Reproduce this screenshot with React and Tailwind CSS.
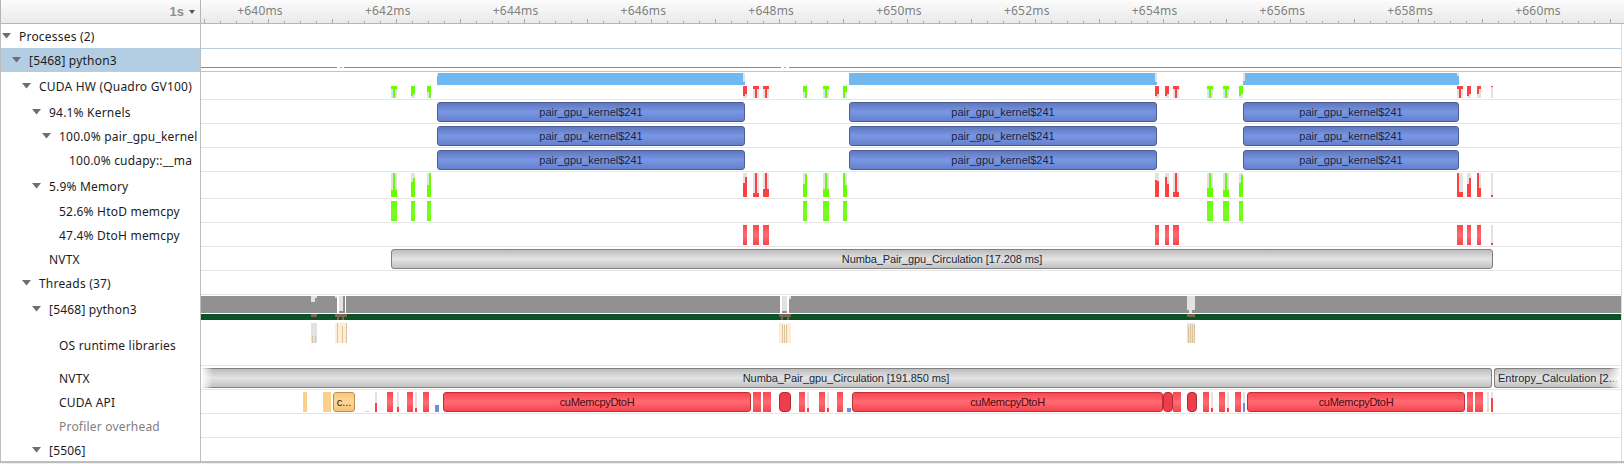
import React from 'react'

const ORIGIN = 201

const fills = {
  g: 'bg-[#66ff00]',
  r: 'bg-[#ff4040]',
  x: 'bg-[#e2e2e2]',
  b: 'bg-[#72b8f0]',
  o: 'bg-[#fcd08c]',
  l: 'bg-[#6f8fdc]',
  br: 'bg-[#7c6650]',
  wh: 'bg-white',
  t: 'bg-[#dcc49c]',
  p: 'bg-[#fdeed8]',
}

const rulerLabels = [640, 642, 644, 646, 648, 650, 652, 654, 656, 658, 660]
const ticks = Array.from({ length: 90 }, (_, i) => i)

function Piece({ x, w, y, h, c }) {
  return <div className={`absolute ${fills[c]}`} style={{ left: x - ORIGIN, width: w, top: y, height: h }} />
}

function Pieces({ list }) {
  return list.map(([x, w, y, h, c], i) => <Piece key={i} x={x} w={w} y={y} h={h} c={c} />)
}

// small columns under the blue bars, y 14..26 of the row
function topCols(list) {
  const out = []
  list.forEach(([x, w, c, kind]) => {
    out.push([x, w, 14, 12, 'x'])
    if (kind === 'T') {
      out.push([x, w, 14, 3, c], [x + 2, 2, 14, 12, c])
    } else if (kind === 'P') {
      out.push([x, w, 14, 8, c], [x, 2, 14, 10, c])
    } else if (kind === 'F') {
      out.push([x, w, 14, 6, c], [x + 2, 2, 14, 12, c])
    } else if (kind === 'E') {
      out.push([x, w, 14, 6, c], [x, 2, 14, 12, c])
    } else if (kind === 'Q') {
      out.push([x, w, 14, 3, c], [x, 2, 14, 8, c])
    } else {
      out.push([x, w, 14, 1, c])
    }
  })
  return out
}

// memory columns, y 1..25 of the row
function memCols(list) {
  const out = []
  list.forEach(([x, w, c, kind, a, b]) => {
    out.push([x, w, 1, 24, 'x'])
    if (kind === 'T') {
      out.push([x + 2, 2, 1, 24, c], [x, w, a, 25 - a, c])
    } else if (kind === 'L') {
      out.push([x, 2, 1, 24, c], [x, w, a, 25 - a, c])
    } else if (kind === 'H') {
      out.push([x, 2, a, 25 - a, c], [x + 2, 2, b, 25 - b, c])
    } else {
      out.push([x, w, 23, 2, c])
    }
  })
  return out
}

const cudaPieces = topCols([
  [391, 6, 'g', 'T'], [411, 4, 'g', 'P'], [427, 4, 'g', 'F'],
  [743, 4, 'r', 'P'], [753, 6, 'r', 'T'], [763, 6, 'r', 'T'],
  [803, 4, 'g', 'F'], [823, 6, 'g', 'T'], [843, 4, 'g', 'E'],
  [1155, 4, 'r', 'P'], [1165, 4, 'r', 'P'], [1173, 6, 'r', 'T'],
  [1207, 6, 'g', 'T'], [1223, 6, 'g', 'T'], [1239, 4, 'g', 'P'],
  [1457, 6, 'r', 'T'], [1467, 4, 'r', 'P'], [1477, 4, 'r', 'Q'], [1491, 2, 'r', 'S'],
])

const memoryPieces = memCols([
  [391, 6, 'g', 'T', 18], [411, 4, 'g', 'H', 10, 6], [427, 4, 'g', 'H', 13, 1],
  [743, 4, 'r', 'H', 11, 5], [753, 6, 'r', 'T', 21], [763, 6, 'r', 'T', 17],
  [803, 4, 'g', 'H', 12, 2], [823, 6, 'g', 'T', 17], [843, 4, 'g', 'H', 1, 13],
  [1155, 4, 'r', 'H', 8, 9], [1165, 4, 'r', 'H', 5, 12], [1173, 6, 'r', 'T', 20],
  [1207, 6, 'g', 'T', 16], [1223, 6, 'g', 'T', 18], [1239, 4, 'g', 'H', 11, 3],
  [1457, 6, 'r', 'L', 20], [1467, 4, 'r', 'H', 12, 6], [1477, 4, 'r', 'H', 1, 16], [1491, 2, 'r', 'S'],
])

const htodBars = [[391, 6], [411, 4], [427, 4], [803, 4], [823, 6], [843, 4], [1207, 6], [1223, 6], [1239, 4]]
const dtohBars = [[743, 4], [753, 6], [763, 6], [1155, 4], [1165, 4], [1173, 6], [1457, 6], [1467, 4], [1477, 4]]
const kernelBars = [[437, 308], [849, 308], [1243, 216]]

const threadPieces = [
  [311, 4, 1, 6, 'x'], [315, 2, 1, 2, 'x'],
  [337, 2, 1, 18, 'wh'], [339, 4, 1, 15, 'x'], [345, 1, 1, 18, 'wh'], [335, 2, 1, 2, 'x'],
  [780, 2, 1, 18, 'wh'], [782, 5, 1, 15, 'x'], [787, 2, 1, 18, 'wh'], [789, 2, 1, 3, 'x'],
  [1187, 8, 1, 14, 'x'], [1189, 3, 15, 3, 'x'],
  [311, 6, 19, 3, 'br'], [335, 12, 19, 3, 'br'], [779, 12, 19, 3, 'br'], [1187, 8, 19, 3, 'br'],
  [337, 2, 19, 6, 'br'], [342, 2, 19, 6, 'br'], [781, 2, 19, 6, 'br'], [787, 2, 19, 6, 'br'],
]

const osPieces = [
  [311, 6, 0, 20, 'x'], [312, 1, 13, 7, 't'], [315, 1, 13, 7, 't'],
  [335, 12, 0, 20, 'p'], [337, 1, 0, 20, 't'], [342, 1, 3, 17, 't'], [346, 1, 0, 20, 't'],
  [779, 12, 0, 20, 'p'], [782, 1, 2, 18, 't'], [784, 1, 2, 18, 't'], [786, 1, 2, 18, 't'],
  [1187, 8, 0, 20, 'x'], [1188, 1, 4, 16, 't'], [1190, 1, 2, 18, 't'], [1192, 1, 2, 18, 't'], [1194, 1, 2, 18, 't'],
]

const apiFlat = [
  [303, 4, 2, 20, 'o'], [323, 8, 2, 20, 'o'], [365, 4, 21, 1, 'o'],
  [375, 2, 2, 20, 'x'], [375, 2, 13, 9, 'r'], [397, 2, 2, 20, 'x'], [397, 2, 17, 5, 'r'],
  [415, 2, 2, 20, 'x'], [415, 2, 18, 4, 'r'], [435, 4, 15, 7, 'l'],
  [807, 2, 2, 20, 'x'], [807, 2, 18, 4, 'r'], [827, 2, 2, 20, 'x'], [827, 2, 18, 4, 'r'],
  [847, 4, 18, 4, 'l'], [1211, 2, 2, 20, 'x'], [1211, 2, 18, 4, 'r'],
  [1227, 2, 2, 20, 'x'], [1227, 2, 18, 4, 'r'], [1243, 2, 2, 20, 'x'], [1243, 2, 13, 9, 'l'],
  [1487, 2, 2, 20, 'x'], [1487, 2, 19, 3, 'o'], [1491, 2, 2, 20, 'x'], [1491, 2, 8, 14, 'r'],
]
const apiRed = [
  [387, 6], [407, 6], [423, 6], [753, 8], [763, 8], [799, 6], [819, 6], [837, 6],
  [1173, 8], [1203, 6], [1219, 6], [1235, 6], [1467, 6], [1475, 8],
]
const apiMain = [[443, 308], [852, 311], [1247, 218]]
const apiDark = [[779, 12], [1187, 10], [1163, 10]]

const redGlow = 'bg-linear-to-b from-[#fb4450] via-[#ff6a72] to-[#f5434e]'
const greyGlow = 'bg-linear-to-b from-[#bdbdbd] via-[#e4e4e4] to-[#c2c2c2]'

function Box({ x, w, className, children }) {
  return (
    <div
      className={`absolute top-[2px] box-border flex h-5 items-center justify-center overflow-hidden border text-[11px] whitespace-nowrap ${className}`}
      style={{ left: x - ORIGIN, width: w }}
    >
      {children}
    </div>
  )
}

function Caret() {
  return (
    <svg className="absolute top-1/2 -mt-[4px]" style={{ left: -17 }} width="9" height="6" viewBox="0 0 9 6">
      <path d="M0 0H9L4.5 5.5Z" fill="#6e6e6e" />
    </svg>
  )
}

function Row({ label, level = 0, caret, height = 24, selected, muted, children, timelineClass = '' }) {
  return (
    <div className="flex shrink-0" style={{ height }}>
      <div
        className={`box-border flex w-[201px] shrink-0 items-center overflow-hidden border-x border-[#bdbdbd] pt-[2px] font-["Noto_Sans",sans-serif] text-[12px] tracking-[0.2px] whitespace-nowrap ${
          selected ? 'bg-[#b3cde3]' : 'bg-white'
        } ${muted ? 'text-[#808080]' : 'text-[#1c1c1c]'}`}
        style={{ paddingLeft: 18 + level * 10 }}
      >
        <span className="relative">
          {caret && <Caret />}
          {label}
        </span>
      </div>
      <div className={`relative box-border w-[1420px] overflow-hidden bg-white ${timelineClass}`}>{children}</div>
      <div className="w-[3px] border-l border-[#dcdcdc] bg-white" />
    </div>
  )
}

function Ruler() {
  return (
    <div className="flex h-6 shrink-0 bg-linear-to-b from-[#fcfcfc] to-[#e9e9e9]">
      <div className="box-border flex w-[201px] shrink-0 items-center justify-end gap-[5px] border-x border-b border-[#b5b5b5] pr-[5px]">
        <span className="text-[13px] font-bold text-[#8f8f8f]">1s</span>
        <svg width="6" height="4" viewBox="0 0 6 4">
          <path d="M0 0H6L3 4Z" fill="#555" />
        </svg>
      </div>
      <div className="relative box-border flex-1 overflow-hidden border-b border-[#b5b5b5]">
        {rulerLabels.map((ms) => (
          <span
            key={ms}
            className='absolute top-[2px] w-[60px] text-center font-["Noto_Sans",sans-serif] text-[12px] tracking-[0.2px] text-[#808080]'
            style={{ left: 260 + (ms - 640) * 63.9 - ORIGIN - 30 }}
          >
            +{ms}ms
          </span>
        ))}
        {ticks.map((i) => (
          <div
            key={i}
            className="absolute bottom-0 w-px bg-[#a8a8a8]"
            style={{ left: Math.round(3 + i * 15.975), height: i % 4 === 0 ? 4 : 2 }}
          />
        ))}
      </div>
    </div>
  )
}

const rowLine = 'border-b border-[#e6e6e6]'

export default function App() {
  return (
    <div className='flex h-[464px] w-[1624px] flex-col overflow-hidden bg-[#f1f1f1] font-["Liberation_Sans",sans-serif]'>
      <Ruler />
      <div className="flex h-[437px] shrink-0 flex-col overflow-hidden">
        <Row label="Processes (2)" caret />
        <Row label="[5468] python3" level={1} caret selected>
          <div className="absolute inset-x-0 top-0 h-px bg-[#b3cde3]" />
          <div className="absolute inset-x-0 top-[19px] h-px bg-[#8c8c8c]" />
          <div className="absolute top-[19px] left-[136px] h-px w-[7px] bg-white" />
          <div className="absolute top-[19px] left-[139px] h-px w-[2px] bg-[#b0b0b0]" />
          <div className="absolute top-[19px] left-[580px] h-px w-2 bg-white" />
          <div className="absolute top-[19px] left-[583px] h-px w-[2px] bg-[#b0b0b0]" />
          <div className="absolute inset-x-0 top-[23px] h-px bg-[#b3c8da]" />
        </Row>
        <Row label="CUDA HW (Quadro GV100)" level={2} caret height={28} timelineClass={rowLine}>
          {kernelBars.map(([x, w]) => (
            <Piece key={x} x={x} w={w} y={1} h={12} c="b" />
          ))}
          <Pieces
            list={[
              [437, 1, 1, 3, 'x'],
              [743, 2, 1, 9, 'x'],
              [1155, 2, 1, 9, 'x'],
              [1243, 2, 1, 8, 'x'],
              [1457, 2, 1, 3, 'x'],
            ]}
          />
          <Pieces list={cudaPieces} />
        </Row>
        {[
          ['94.1% Kernels', 3, true],
          ['100.0% pair_gpu_kernel', 4, true],
          ['100.0% cudapy::__ma', 5, false],
        ].map(([label, level, caret]) => (
          <Row key={label} label={label} level={level} caret={caret} timelineClass={rowLine}>
            {kernelBars.map(([x, w]) => (
              <Box
                key={x}
                x={x}
                w={w}
                className="rounded-[3px] border-[#4c5c94] bg-linear-to-b from-[#5f78bd] via-[#7a97e6] to-[#6480c8] text-[#17233f]"
              >
                pair_gpu_kernel$241
              </Box>
            ))}
          </Row>
        ))}
        <Row label="5.9% Memory" level={3} caret height={27} timelineClass={rowLine}>
          <Pieces list={memoryPieces} />
        </Row>
        <Row label="52.6% HtoD memcpy" level={4} timelineClass={rowLine}>
          {htodBars.map(([x, w]) => (
            <div
              key={x}
              className="absolute top-[2px] h-5 bg-linear-to-b from-[#66ff00] via-[#7dfa2a] to-[#66ff00]"
              style={{ left: x - ORIGIN, width: w }}
            />
          ))}
        </Row>
        <Row label="47.4% DtoH memcpy" level={4} timelineClass={rowLine}>
          {dtohBars.map(([x, w]) => (
            <div key={x} className={`absolute top-[2px] h-5 ${redGlow}`} style={{ left: x - ORIGIN, width: w }} />
          ))}
          <Piece x={1491} w={2} y={2} h={20} c="x" />
          <Piece x={1491} w={2} y={20} h={2} c="r" />
        </Row>
        <Row label="NVTX" level={3} timelineClass={rowLine}>
          <Box x={391} w={1102} className={`rounded-[3px] border-[#808080] tracking-[-0.1px] text-[#1c2733] ${greyGlow}`}>
            Numba_Pair_gpu_Circulation [17.208 ms]
          </Box>
        </Row>
        <Row label="Threads (37)" level={2} caret timelineClass={rowLine} />
        <Row label="[5468] python3" level={3} caret height={28}>
          <div className="absolute inset-x-0 top-px h-[17px] bg-[#919191]" />
          <div className="absolute inset-x-0 top-[19px] h-[6px] bg-[#0b5228]" />
          <Pieces list={threadPieces} />
        </Row>
        <Row label="OS runtime libraries" level={4} height={43} timelineClass={rowLine}>
          <Pieces list={osPieces} />
        </Row>
        <Row label="NVTX" level={4} timelineClass={rowLine}>
          <div
            className={`absolute top-[2px] left-0 box-border flex h-5 w-[1291px] items-center justify-center rounded-r-[3px] border-y border-r border-[#808080] text-[11px] tracking-[-0.1px] text-[#1c2733] ${greyGlow}`}
          >
            Numba_Pair_gpu_Circulation [191.850 ms]
          </div>
          <div className="absolute top-[2px] left-0 h-5 w-3 bg-linear-to-r from-white to-transparent" />
          <div
            className={`absolute top-[2px] left-[1293px] box-border flex h-5 w-[127px] items-center overflow-hidden rounded-l-[3px] border-y border-l border-[#808080] pl-[3px] text-[11px] whitespace-nowrap text-[#1c2733] ${greyGlow}`}
          >
            Entropy_Calculation [2...
          </div>
          <div className="absolute top-[2px] right-0 h-5 w-3 bg-linear-to-l from-white to-transparent" />
        </Row>
        <Row label="CUDA API" level={4} timelineClass={rowLine}>
          <Pieces list={apiFlat} />
          <Box
            x={333}
            w={22}
            className="rounded-[3px] border-[#b8924e] bg-linear-to-b from-[#f7c67e] via-[#ffd596] to-[#f5c47c] text-[#2a2010]"
          >
            c...
          </Box>
          {apiRed.map(([x, w]) => (
            <div key={x} className={`absolute top-[2px] h-5 ${redGlow}`} style={{ left: x - ORIGIN, width: w }} />
          ))}
          {apiDark.map(([x, w]) => (
            <Box key={x} x={x} w={w} className="rounded-[4px] border-[#b02b36] bg-[#ee3e4c]" />
          ))}
          {apiMain.map(([x, w]) => (
            <Box key={x} x={x} w={w} className={`rounded-[3px] border-[#c22d38] tracking-[-0.3px] text-[#4a0d12] ${redGlow}`}>
              cuMemcpyDtoH
            </Box>
          ))}
        </Row>
        <Row label="Profiler overhead" level={4} muted timelineClass={rowLine} />
        <Row label="[5506]" level={3} caret />
      </div>
      <div className="h-[2px] shrink-0 bg-[#bdbdbd]" />
    </div>
  )
}
